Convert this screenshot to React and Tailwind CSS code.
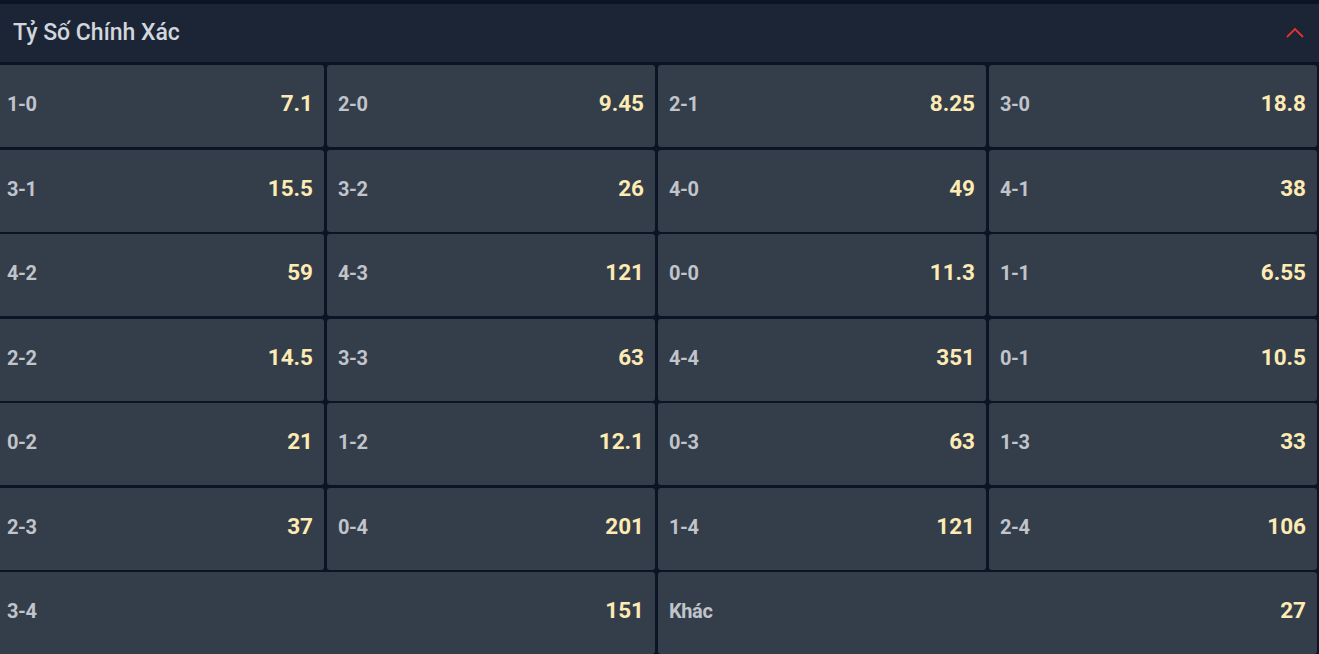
import React from "react"

const scores = [
  ["1-0", "7.1"], ["2-0", "9.45"], ["2-1", "8.25"], ["3-0", "18.8"],
  ["3-1", "15.5"], ["3-2", "26"], ["4-0", "49"], ["4-1", "38"],
  ["4-2", "59"], ["4-3", "121"], ["0-0", "11.3"], ["1-1", "6.55"],
  ["2-2", "14.5"], ["3-3", "63"], ["4-4", "351"], ["0-1", "10.5"],
  ["0-2", "21"], ["1-2", "12.1"], ["0-3", "63"], ["1-3", "33"],
  ["2-3", "37"], ["0-4", "201"], ["1-4", "121"], ["2-4", "106"],
]

const Cell = ({ label, odds, wide }) => (
  <div
    className={`${wide ? "col-span-2" : ""} h-[82px] flex items-center justify-between rounded-[3px] bg-[#343d4a] pl-[11px] pr-[11px] pb-[4px]`}
  >
    <span className="text-[20px] font-bold text-[#c0c4cb] tracking-[-0.4px]">{label}</span>
    <span className="text-[22.5px] font-bold text-[#fdebb3]">{odds}</span>
  </div>
)

export default function App() {
  return (
    <div
      className="min-h-screen overflow-hidden bg-[#0a1424] pt-[4px] pr-[2px]"
      style={{ fontFamily: "Roboto, 'Noto Sans', sans-serif" }}
    >
      <div className="h-[58px] bg-[#1c2536] flex items-center justify-between pl-[13px] pr-[14px] mr-[-2px]">
        <h2 className="text-[23px] font-medium text-[#d2d6dd]">Tỷ Số Chính Xác</h2>
        <svg width="20" height="12" viewBox="0 0 20 12" fill="none">
          <path d="M2 10 L10 2 L18 10" stroke="#e5322d" strokeWidth="1.8" />
        </svg>
      </div>
      <div className="mt-[3px] ml-[-4px] grid grid-cols-4 gap-x-[3px] gap-y-[2.5px]">
        {scores.map(([l, o]) => (
          <Cell key={l} label={l} odds={o} />
        ))}
        <Cell label="3-4" odds="151" wide />
        <Cell label="Khác" odds="27" wide />
      </div>
    </div>
  )
}
